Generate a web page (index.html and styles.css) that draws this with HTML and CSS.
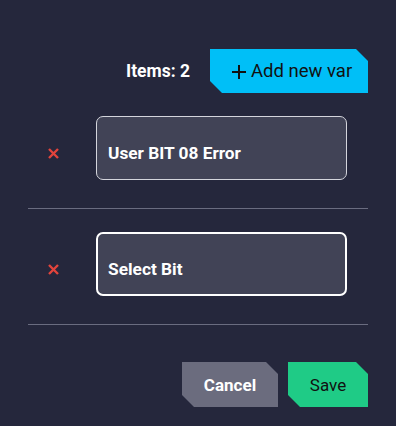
FILE: index.html
```html
<!DOCTYPE html>
<html lang="en">
<head>
  <meta charset="UTF-8" />
  <title>Variables</title>
  <link rel="stylesheet" href="styles.css">
</head>
<body>
  <div id="panel">
    <div class="toolbar">
      <span class="count">Items: 2</span>
      <button class="btn btn-add">
        <svg class="plus" width="14" height="14" viewBox="0 0 14 14"><path d="M7 0v14M0 7h14" stroke="#111" stroke-width="2"/></svg>
        Add new var
      </button>
    </div>

    <div class="row">
      <span class="remove"><svg width="11" height="11" viewBox="0 0 11 11"><path d="M1 1l9 9M10 1l-9 9" stroke="#e2443c" stroke-width="2.4"/></svg></span>
      <div class="field">User BIT 08 Error</div>
    </div>
    <div class="row">
      <span class="remove"><svg width="11" height="11" viewBox="0 0 11 11"><path d="M1 1l9 9M10 1l-9 9" stroke="#e2443c" stroke-width="2.4"/></svg></span>
      <div class="field active">Select Bit</div>
    </div>

    <div class="actions">
      <button class="btn btn-cancel">Cancel</button>
      <button class="btn btn-save">Save</button>
    </div>
  </div>
</body>
</html>
```

FILE: styles.css
```css
body {
  font-family: Roboto, "Liberation Sans", sans-serif;
  background-color: #25273c;
  margin: 0;
  color: #fff;
}
#panel {
  padding: 49px 28px 0 28px;
}
.toolbar {
  display: flex;
  justify-content: flex-end;
  align-items: center;
  gap: 20px;
}
.count {
  font-weight: bold;
  font-size: 17.5px;
}
.btn {
  border: none;
  font-family: inherit;
  font-size: 17px;
  cursor: pointer;
  clip-path: polygon(0 0, calc(100% - 12px) 0, 100% 12px, 100% 100%, 12px 100%, 0 calc(100% - 12px));
}
.btn-add {
  width: 158px;
  height: 44px;
  background-color: #00bff7;
  color: #111;
  font-size: 18.5px;
  padding: 0 0 0 22px;
  display: flex;
  align-items: center;
  gap: 5px;
}
.plus {
  position: relative;
  top: 1px;
}
.row {
  display: flex;
  align-items: flex-start;
  height: 92px;
  padding-top: 23px;
  border-bottom: 1px solid #6a6c80;
}
.remove {
  width: 68px;
  padding: 32px 0 0 20px;
  box-sizing: border-box;
  line-height: 0;
}
.field {
  width: 251px;
  height: 64px;
  box-sizing: border-box;
  border: 1px solid #d4d5dc;
  border-radius: 7px;
  background-color: #414356;
  font-weight: bold;
  font-size: 17.3px;
  padding: 26px 0 0 11px;
}
.field.active {
  border: 2px solid #fff;
  padding: 25px 0 0 10px;
}
.actions {
  display: flex;
  justify-content: flex-end;
  gap: 10px;
  margin-top: 37px;
}
.btn-cancel {
  width: 96px;
  height: 45px;
  background-color: #6b6c7e;
  color: #fff;
  font-weight: bold;
}
.btn-save {
  width: 80px;
  height: 45px;
  background-color: #1fcb86;
  color: #111;
}
```
